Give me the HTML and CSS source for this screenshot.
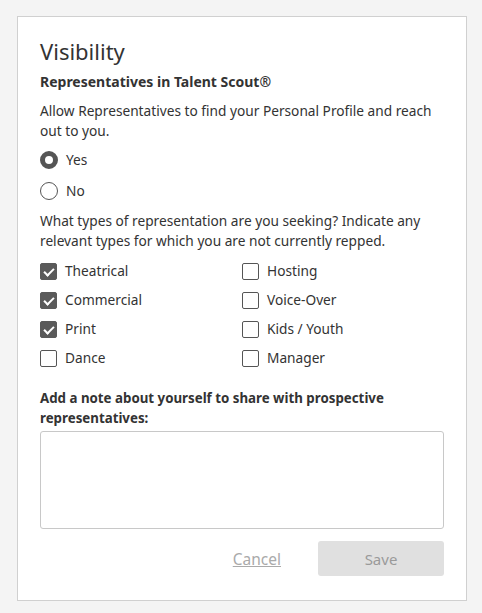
FILE: index.html
```html
<!DOCTYPE html>
<html lang="en">
<head>
    <meta charset="UTF-8">
    <meta name="viewport" content="width=device-width, initial-scale=1.0">
    <title>Visibility</title>
    <link rel="stylesheet" href="styles.css">
</head>
<body>
    <div class="card">
        <h2 class="title">Visibility</h2>
        <h3 class="subtitle">Representatives in Talent Scout®</h3>
        <p class="text intro">Allow Representatives to find your Personal Profile and reach out to you.</p>

        <div class="radios">
            <label class="radio checked"><span class="dot"></span>Yes</label>
            <label class="radio"><span class="dot"></span>No</label>
        </div>

        <p class="text">What types of representation are you seeking? Indicate any relevant types for which you are not currently repped.</p>

        <div class="checks">
            <label class="check checked"><span class="box"></span>Theatrical</label>
            <label class="check"><span class="box"></span>Hosting</label>
            <label class="check checked"><span class="box"></span>Commercial</label>
            <label class="check"><span class="box"></span>Voice-Over</label>
            <label class="check checked"><span class="box"></span>Print</label>
            <label class="check"><span class="box"></span>Kids / Youth</label>
            <label class="check"><span class="box"></span>Dance</label>
            <label class="check"><span class="box"></span>Manager</label>
        </div>

        <p class="note-label">Add a note about yourself to share with prospective representatives:</p>
        <div class="note"></div>

        <div class="actions">
            <a class="cancel">Cancel</a>
            <button class="save">Save</button>
        </div>
    </div>
</body>
</html>
```

FILE: styles.css
```css
body,html{
    margin: 0;
    padding: 0;
}
body{
    background: #f4f4f4;
    font-family: "Noto Sans", "Open Sans", sans-serif;
    color: #333;
    font-size: 13.7px;
    padding: 16px 15px 13px 17px;
}
.card{
    box-sizing: border-box;
    width: 450px;
    background: #fff;
    border: 1px solid #d0d0d0;
    padding: 20px 22px 24px;
}
.title{
    margin: 0;
    font-size: 22px;
    font-weight: 400;
    line-height: 28px;
}
.subtitle{
    margin: 7px 0 0;
    font-size: 14px;
    font-weight: 700;
    line-height: 20px;
}
.text{
    margin: 10px 0 0;
    line-height: 20px;
}
.text.intro{
    margin-top: 9px;
}
.radios{
    margin-top: 9px;
    display: flex;
    flex-direction: column;
    gap: 11px;
}
.radio,
.check{
    display: flex;
    align-items: center;
    line-height: 20px;
}
.dot{
    box-sizing: border-box;
    width: 18px;
    height: 18px;
    border: 1px solid #555;
    border-radius: 50%;
    margin-right: 8px;
}
.radio.checked .dot{
    border-width: 5px;
}
.checks{
    margin-top: 10px;
    display: grid;
    grid-template-columns: 202px 1fr;
    row-gap: 9px;
}
.box{
    box-sizing: border-box;
    width: 17px;
    height: 17px;
    border: 1px solid #555;
    border-radius: 2px;
    margin-right: 8px;
    position: relative;
}
.check.checked .box{
    background: #5a5a5a;
    border-color: #5a5a5a;
}
.check.checked .box::after{
    content: "";
    position: absolute;
    left: 5px;
    top: 2px;
    width: 4px;
    height: 8px;
    border: solid #fff;
    border-width: 0 2px 2px 0;
    transform: rotate(45deg);
}
.note-label{
    margin: 20px 0 0;
    font-size: 13.3px;
    font-weight: 700;
    line-height: 20px;
}
.note{
    margin-top: 3px;
    height: 96px;
    border: 1px solid #c8c8c8;
    border-radius: 3px;
}
.actions{
    margin-top: 12px;
    display: flex;
    justify-content: flex-end;
    align-items: center;
}
.cancel{
    color: #aaa;
    text-decoration: underline;
    font-size: 15.5px;
    margin-right: 37px;
}
.save{
    width: 126px;
    height: 35px;
    border: 0;
    border-radius: 3px;
    background: #e0e0e0;
    color: #9a9a9a;
    font-family: inherit;
    font-size: 15px;
}
```
